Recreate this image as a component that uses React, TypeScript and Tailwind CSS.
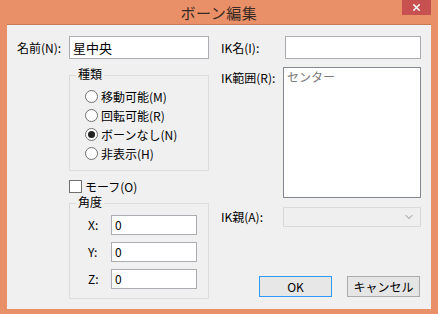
import { ChevronDown, X } from "lucide-react";

const font = { fontFamily: '"Noto Sans CJK JP", "Liberation Sans", sans-serif' };

function Radio({ label, checked }: { label: string; checked?: boolean }) {
  return (
    <div className="flex items-center h-[19px]">
      <span className="w-[13px] h-[13px] rounded-full border border-[#707070] bg-white flex items-center justify-center">
        {checked && <span className="w-[7px] h-[7px] rounded-full bg-[#222]" />}
      </span>
      <span className="ml-[3px] text-[12px] leading-none text-black">{label}</span>
    </div>
  );
}

function AxisRow({ axis }: { axis: string }) {
  return (
    <div className="flex items-center h-[20px]">
      <span className="w-[23px] text-[12px] leading-none">{axis}</span>
      <div className="w-[86px] h-[20px] border border-[#abadb3] bg-white px-[3px] flex items-center text-[12px] leading-none">
        0
      </div>
    </div>
  );
}

export default function App() {
  return (
    <div className="w-[438px] h-[314px] bg-[#ea9068] flex flex-col text-black" style={font}>
      {/* Title bar */}
      <div className="relative h-[24px] flex items-center justify-center">
        <span className="text-[15px] leading-none text-[#3a2a22] tracking-[0.5px]">ボーン編集</span>
        <div className="absolute right-[7px] top-0 w-[29px] h-[15px] bg-[#c75050] flex items-center justify-center">
          <X size={11} strokeWidth={3} className="text-white" />
        </div>
      </div>

      {/* Client area */}
      <div className="mx-[7px] h-[285px] bg-[#f0f0f0] border-t border-[#c8795a] flex pt-[11px]">
        {/* Left column */}
        <div className="w-[202px] shrink-0 flex flex-col">
          <div className="flex items-center h-[23px]">
            <span className="pl-[10px] w-[62px] text-[12px] leading-none">名前(N):</span>
            <div className="w-[140px] h-[23px] border border-[#abadb3] bg-white px-[3px] flex items-center text-[13px] leading-none">
              星中央
            </div>
          </div>

          <div className="relative ml-[62px] mt-[16px] h-[96px] border border-[#dcdcdc] pt-[11px] pl-[15px]">
            <span className="absolute -top-[8px] left-[6px] px-[2px] bg-[#f0f0f0] text-[12px] leading-none">種類</span>
            <Radio label="移動可能(M)" />
            <Radio label="回転可能(R)" />
            <Radio label="ボーンなし(N)" checked />
            <Radio label="非表示(H)" />
          </div>

          <div className="ml-[62px] mt-[9px] flex items-center h-[13px]">
            <span className="w-[13px] h-[13px] border border-[#707070] bg-white" />
            <span className="ml-[3px] text-[12px] leading-none">モーフ(O)</span>
          </div>

          <div className="relative ml-[62px] mt-[10px] h-[96px] border border-[#dcdcdc] pt-[11px] pl-[18px] flex flex-col gap-[7px]">
            <span className="absolute -top-[8px] left-[6px] px-[2px] bg-[#f0f0f0] text-[12px] leading-none">角度</span>
            <AxisRow axis="X:" />
            <AxisRow axis="Y:" />
            <AxisRow axis="Z:" />
          </div>
        </div>

        {/* Right column */}
        <div className="ml-[12px] w-[200px] flex flex-col">
          <div className="flex items-center h-[23px]">
            <span className="w-[64px] text-[12px] leading-none">IK名(I):</span>
            <div className="w-[136px] h-[23px] border border-[#abadb3] bg-white" />
          </div>

          <div className="flex mt-[8px]">
            <span className="w-[62px] pt-[5px] text-[12px] leading-none">IK範囲(R):</span>
            <div className="w-[138px] h-[131px] border border-[#828790] bg-white px-[3px] pt-[3px] text-[12px] leading-none text-[#7a7a7a]">
              センター
            </div>
          </div>

          <div className="flex items-center mt-[9px] h-[20px]">
            <span className="w-[62px] text-[12px] leading-none">IK親(A):</span>
            <div className="w-[138px] h-[20px] border border-[#d9d9d9] bg-[#efefef] flex items-center justify-end pr-[5px]">
              <ChevronDown size={12} strokeWidth={2.5} className="text-[#bdbdbd]" />
            </div>
          </div>

          <div className="flex mt-[49px] ml-[38px] gap-[15px]">
            <div className="w-[73px] h-[21px] border border-[#3399ff] bg-[#e7e7e7] flex items-center justify-center text-[12px] leading-none">
              OK
            </div>
            <div className="w-[73px] h-[21px] border border-[#acacac] bg-[#e5e5e5] flex items-center justify-center text-[12px] leading-none">
              キャンセル
            </div>
          </div>
        </div>
      </div>
    </div>
  );
}
